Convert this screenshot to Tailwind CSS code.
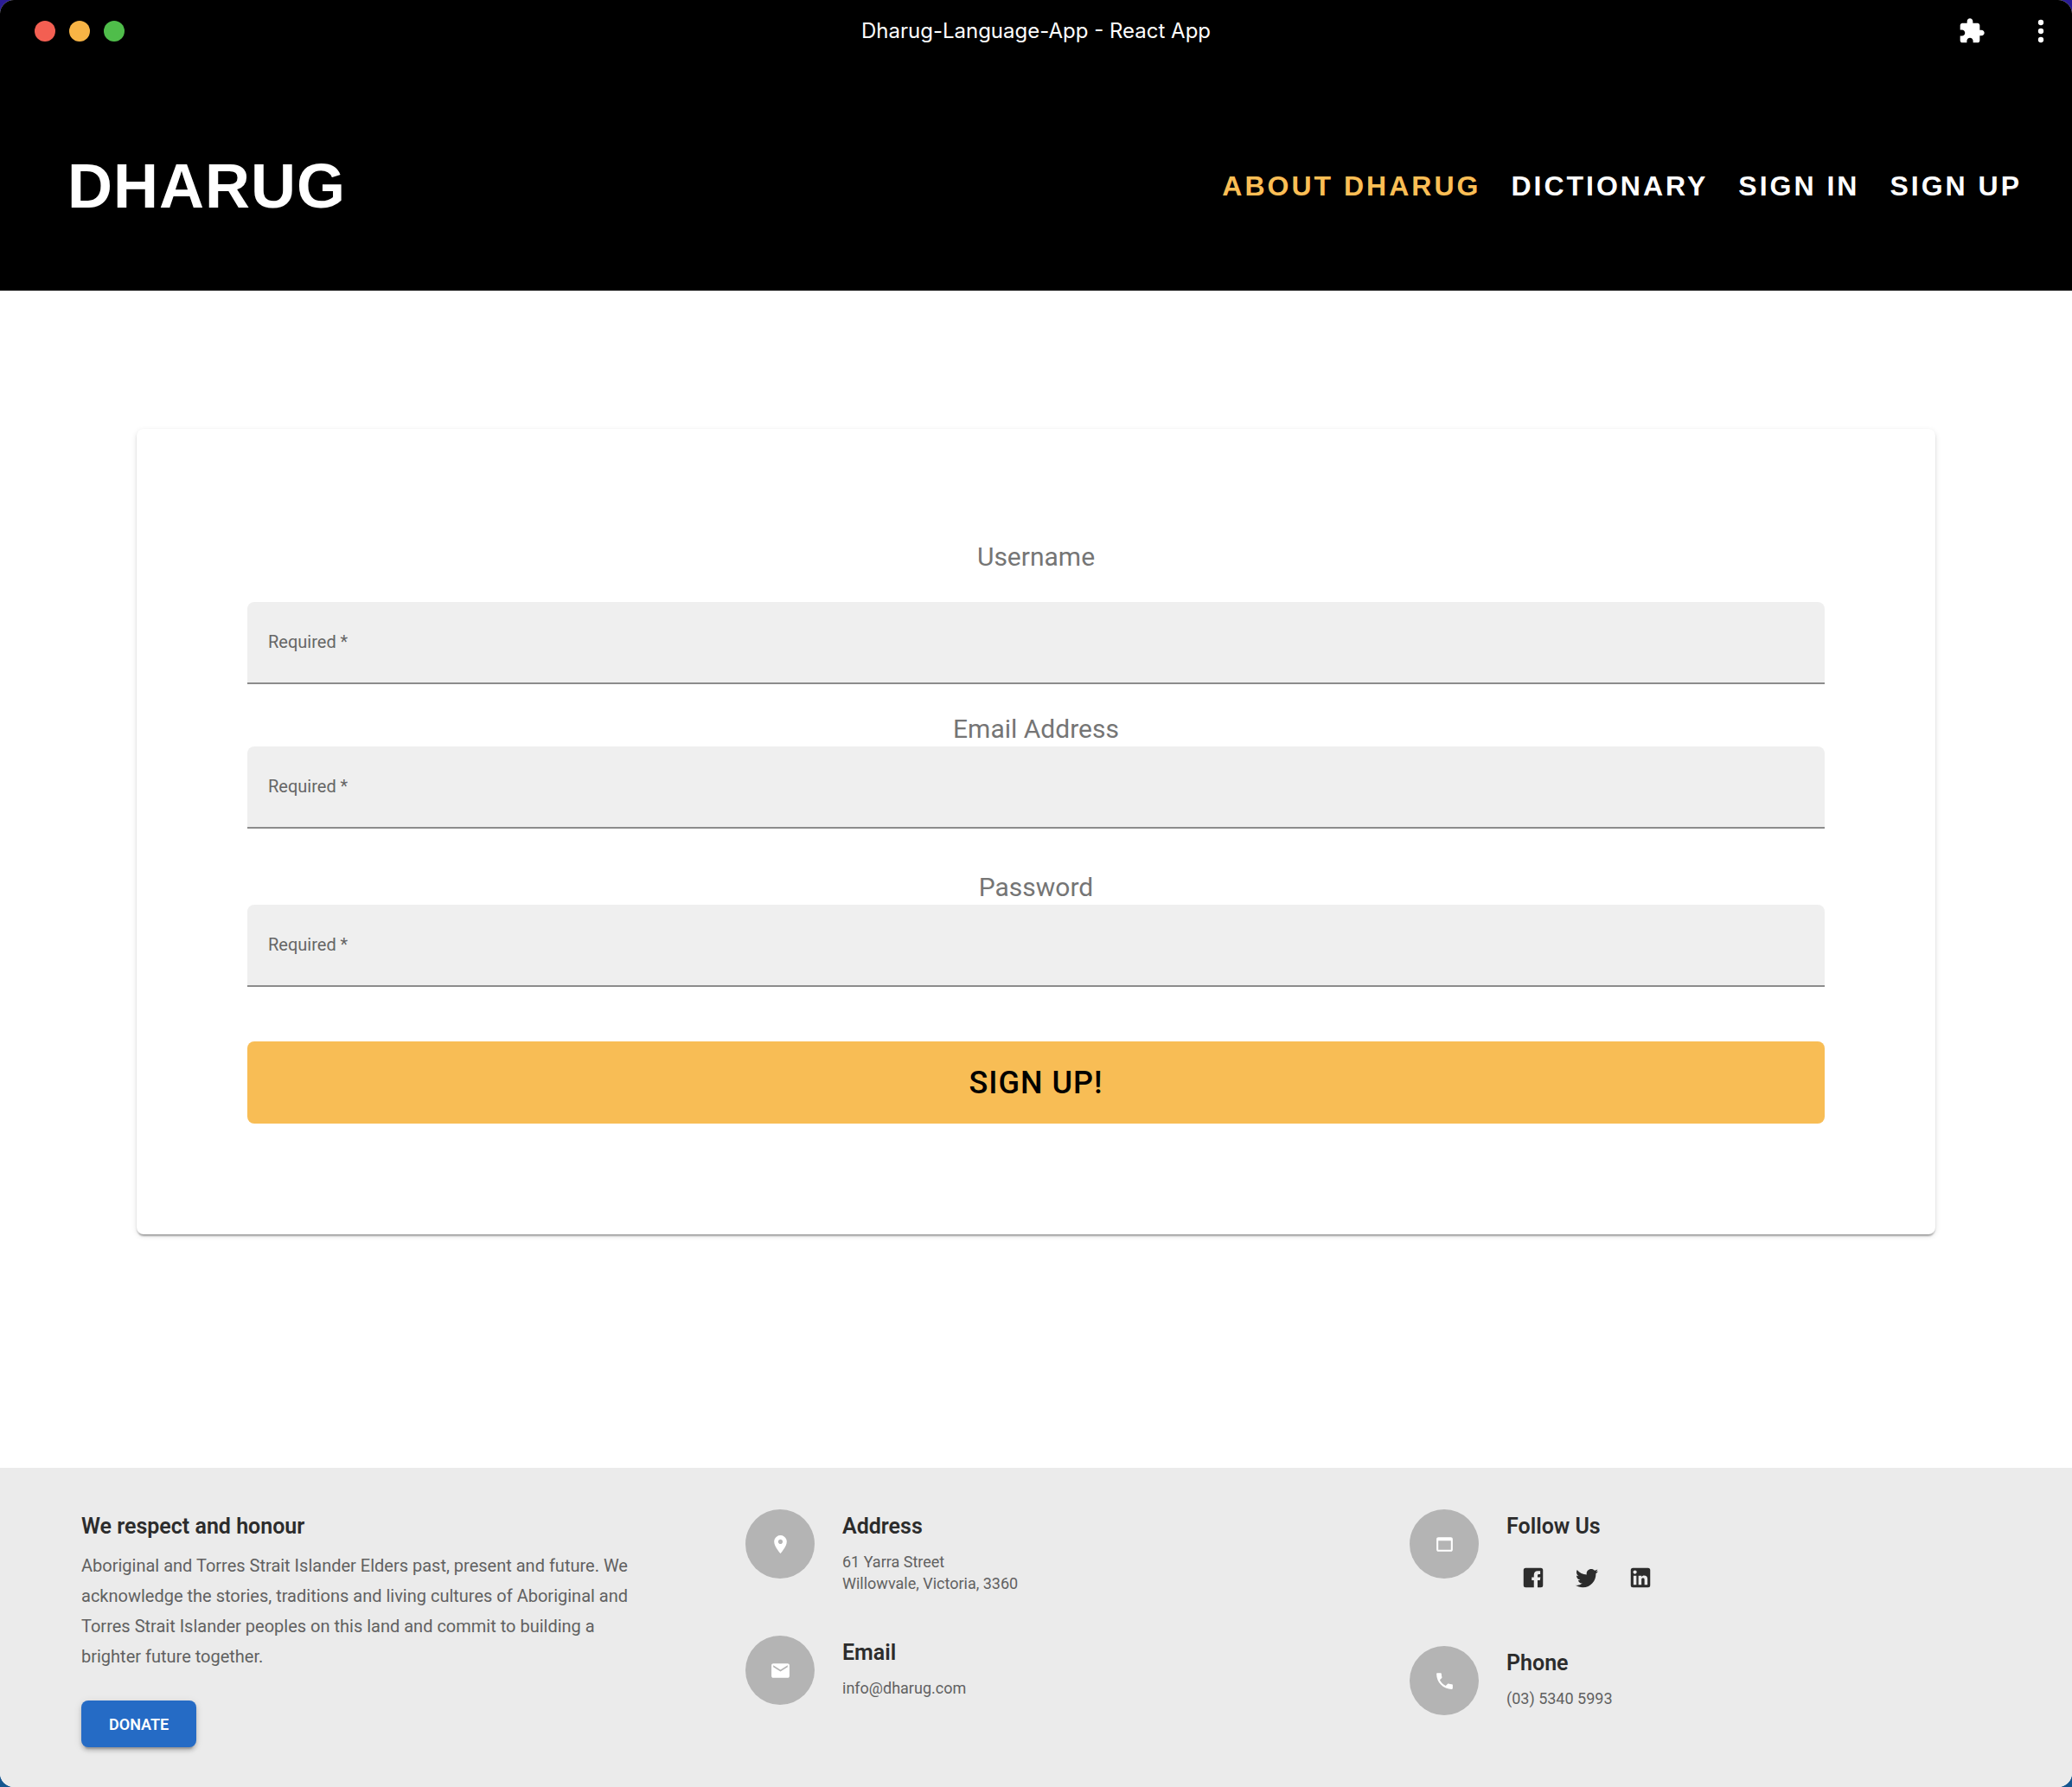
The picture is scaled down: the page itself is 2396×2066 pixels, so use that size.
<!DOCTYPE html>
<html lang="en">
<head>
<meta charset="utf-8">
<meta name="viewport" content="width=device-width, initial-scale=1">
<title>Dharug-Language-App - React App</title>
<script src="https://cdn.jsdelivr.net/npm/@tailwindcss/browser@4"></script>
</head>
<body class="bg-linear-to-b from-[#2b1c96] to-[#15568f] font-[Roboto,sans-serif]">
<div class="flex min-h-screen flex-col overflow-hidden rounded-[16px] bg-white">

  <!-- Window title bar -->
  <div class="grid h-[72px] grid-cols-[1fr_auto_1fr] items-center bg-black px-4 text-white">
    <div class="flex gap-4 pl-6">
      <span class="size-6 rounded-full bg-[#f35f52]"></span>
      <span class="size-6 rounded-full bg-[#f8b445]"></span>
      <span class="size-6 rounded-full bg-[#4fbd4a]"></span>
    </div>
    <div class="font-[Inter,sans-serif] text-[24px] leading-8">Dharug-Language-App - React App</div>
    <div class="flex items-center justify-end gap-11">
      <button type="button" aria-label="Extensions">
        <svg class="size-8" viewBox="0 0 24 24" fill="currentColor"><path d="M20.5 11H19V7c0-1.1-.9-2-2-2h-4V3.5C13 2.12 11.88 1 10.5 1S8 2.12 8 3.5V5H4c-1.1 0-1.99.9-1.99 2v3.8H3.5c1.49 0 2.7 1.21 2.7 2.7s-1.21 2.7-2.7 2.7H2V20c0 1.1.9 2 2 2h3.8v-1.5c0-1.49 1.21-2.7 2.7-2.7 1.49 0 2.7 1.21 2.7 2.7V22H17c1.1 0 2-.9 2-2v-4h1.5c1.38 0 2.5-1.12 2.5-2.5S21.88 11 20.5 11z"/></svg>
      </button>
      <button type="button" aria-label="More options">
        <svg class="size-10" viewBox="0 0 24 24" fill="currentColor"><circle cx="12" cy="6" r="1.9"/><circle cx="12" cy="12" r="1.9"/><circle cx="12" cy="18" r="1.9"/></svg>
      </button>
    </div>
  </div>

  <!-- Site header -->
  <header class="flex h-[264px] items-center justify-between bg-black pt-[22px] pr-[58px] pl-[78px] font-['Liberation_Sans',sans-serif] font-bold text-white">
    <a href="#" class="text-[72px] leading-[84px] tracking-[1px]">DHARUG</a>
    <nav class="flex gap-[35px] text-[32px] leading-10 tracking-[3px]">
      <a href="#" class="text-[#fbbe55]">ABOUT DHARUG</a>
      <a href="#">DICTIONARY</a>
      <a href="#">SIGN IN</a>
      <a href="#">SIGN UP</a>
    </nav>
  </header>

  <!-- Sign-up form -->
  <main class="flex-1 px-[158px] pt-40 pb-[270px]">
    <form class="rounded-[8px] bg-white p-32 shadow-[0_4px_2px_-2px_rgba(0,0,0,0.2),0_2px_2px_0_rgba(0,0,0,0.14),0_2px_6px_0_rgba(0,0,0,0.12)]">
      <label for="username" class="mb-8 block text-center text-[30px] leading-10 text-[#757575]">Username</label>
      <input id="username" type="text" required placeholder="Required *" class="block h-[95px] w-full rounded-t-[8px] border-b-2 border-[#8c8c8c] bg-[#efefef] px-6 pb-0.5 text-[20px] placeholder:text-[#666666]">
      <label for="email" class="mt-8 block text-center text-[30px] leading-10 text-[#757575]">Email Address</label>
      <input id="email" type="email" required placeholder="Required *" class="block h-[95px] w-full rounded-t-[8px] border-b-2 border-[#8c8c8c] bg-[#efefef] px-6 pb-0.5 text-[20px] placeholder:text-[#666666]">
      <label for="password" class="mt-12 block text-center text-[30px] leading-10 text-[#757575]">Password</label>
      <input id="password" type="password" required placeholder="Required *" class="block h-[95px] w-full rounded-t-[8px] border-b-2 border-[#8c8c8c] bg-[#efefef] px-6 pb-0.5 text-[20px] placeholder:text-[#666666]">
      <button type="submit" class="mt-[63px] block h-[95px] w-full rounded-[8px] bg-[#f8bd55] text-[36px] font-medium tracking-[1px] text-black">SIGN UP!</button>
    </form>
  </main>

  <footer class="bg-[#ebebeb] px-[46px] pt-12 pb-[46px] text-[#616161]">
    <div class="grid grid-cols-3">
      <section class="px-12 pt-1">
        <h2 class="text-[25px] leading-8 font-semibold text-[#2c2c2c]">We respect and honour</h2>
        <p class="mt-3 max-w-[650px] text-[20px] leading-[35px]">Aboriginal and Torres Strait Islander Elders past, present and future. We acknowledge the stories, traditions and living cultures of Aboriginal and Torres Strait Islander peoples on this land and commit to building a brighter future together.</p>
        <button type="button" class="mt-[33px] h-[54px] rounded-[8px] bg-[#256bc5] px-8 text-[18px] font-semibold text-white shadow-[0_6px_2px_-4px_rgba(0,0,0,0.2),0_4px_4px_0_rgba(0,0,0,0.14),0_2px_10px_0_rgba(0,0,0,0.12)]">DONATE</button>
      </section>

      <section class="flex flex-col gap-12 px-12">
        <div class="flex items-start gap-8">
          <span class="flex size-20 shrink-0 items-center justify-center rounded-full bg-[#b4b4b4] text-white">
            <svg class="size-[25px]" viewBox="0 0 24 24" fill="currentColor"><path d="M12 2C8.13 2 5 5.13 5 9c0 5.25 7 13 7 13s7-7.75 7-13c0-3.87-3.13-7-7-7zm0 9.5c-1.38 0-2.5-1.12-2.5-2.5s1.12-2.5 2.5-2.5 2.5 1.12 2.5 2.5-1.12 2.5-2.5 2.5z"/></svg>
          </span>
          <div class="pt-1">
            <h2 class="text-[25px] leading-8 font-semibold text-[#2c2c2c]">Address</h2>
            <p class="mt-3 text-[18px] leading-[25px]">61 Yarra Street<br>Willowvale, Victoria, 3360</p>
          </div>
        </div>
        <div class="flex items-start gap-8">
          <span class="flex size-20 shrink-0 items-center justify-center rounded-full bg-[#b4b4b4] text-white">
            <svg class="size-[25px]" viewBox="0 0 24 24" fill="currentColor"><path d="M20 4H4c-1.1 0-1.99.9-1.99 2L2 18c0 1.1.9 2 2 2h16c1.1 0 2-.9 2-2V6c0-1.1-.9-2-2-2zm0 4l-8 5-8-5V6l8 5 8-5v2z"/></svg>
          </span>
          <div class="pt-1">
            <h2 class="text-[25px] leading-8 font-semibold text-[#2c2c2c]">Email</h2>
            <p class="mt-3 text-[18px] leading-[25px]">info@dharug.com</p>
          </div>
        </div>
      </section>

      <section class="flex flex-col gap-12 px-12">
        <div class="flex items-start gap-8">
          <span class="flex size-20 shrink-0 items-center justify-center rounded-full bg-[#b4b4b4] text-white">
            <svg class="size-[25px]" viewBox="0 0 24 24" fill="currentColor"><path d="M19 4H5c-1.11 0-2 .9-2 2v12c0 1.1.89 2 2 2h14c1.1 0 2-.9 2-2V6c0-1.1-.9-2-2-2zm0 14H5V8h14v10z"/></svg>
          </span>
          <div class="pt-1">
            <h2 class="text-[25px] leading-8 font-semibold text-[#2c2c2c]">Follow Us</h2>
            <div class="mt-3 flex text-[#2c2c2c]">
              <a href="#" aria-label="Facebook" class="p-4"><svg class="size-[30px]" viewBox="0 0 24 24" fill="currentColor"><path d="M5 3h14a2 2 0 0 1 2 2v14a2 2 0 0 1-2 2h-3v-6.700h2.200l.5-2.700H16V10c0-.8.3-1.300 1.300-1.300H18.500V5.800h-2.400c-2.300 0-3.500 1.500-3.500 3.700v2.100h-2v2.700h2V21H5a2 2 0 0 1-2-2V5a2 2 0 0 1 2-2z"/></svg></a>
              <a href="#" aria-label="Twitter" class="p-4"><svg class="size-[30px]" viewBox="0 0 24 24" fill="currentColor"><path d="M22.46 6c-.77.35-1.600.58-2.460.69.88-.53 1.560-1.370 1.880-2.380-.83.5-1.750.85-2.720 1.050C18.370 4.500 17.260 4 16 4c-2.350 0-4.270 1.920-4.270 4.290 0 .34.04.67.11.98C8.280 9.090 5.110 7.380 3 4.790c-.37.63-.58 1.370-.58 2.150 0 1.490.75 2.810 1.910 3.560-.71 0-1.370-.2-1.950-.5v.03c0 2.080 1.480 3.820 3.440 4.210a4.220 4.220 0 0 1-1.930.07 4.280 4.280 0 0 0 4 2.980 8.521 8.521 0 0 1-5.330 1.840c-.34 0-.68-.02-1.020-.06C3.440 20.290 5.700 21 8.120 21 16 21 20.330 14.460 20.330 8.790c0-.19 0-.37-.01-.56.84-.6 1.560-1.360 2.140-2.230z"/></svg></a>
              <a href="#" aria-label="LinkedIn" class="p-4"><svg class="size-[30px]" viewBox="0 0 24 24" fill="currentColor"><path d="M19 3a2 2 0 0 1 2 2v14a2 2 0 0 1-2 2H5a2 2 0 0 1-2-2V5a2 2 0 0 1 2-2h14m-.5 15.500v-5.300a3.260 3.260 0 0 0-3.260-3.260c-.85 0-1.840.52-2.320 1.300v-1.110h-2.790v8.370h2.790v-4.930c0-.77.62-1.400 1.390-1.400a1.400 1.400 0 0 1 1.400 1.400v4.930h2.790M6.880 8.560a1.680 1.680 0 0 0 1.680-1.680c0-.93-.75-1.690-1.680-1.690a1.690 1.690 0 0 0-1.690 1.690c0 .93.76 1.680 1.690 1.680m1.390 9.940v-8.370H5.500v8.370h2.770z"/></svg></a>
            </div>
          </div>
        </div>
        <div class="flex items-start gap-8">
          <span class="flex size-20 shrink-0 items-center justify-center rounded-full bg-[#b4b4b4] text-white">
            <svg class="size-[25px]" viewBox="0 0 24 24" fill="currentColor"><path d="M6.620 10.790c1.440 2.830 3.760 5.140 6.590 6.590l2.200-2.200c.27-.27.67-.36 1.020-.24 1.120.37 2.330.57 3.570.57.55 0 1 .45 1 1V20c0 .55-.45 1-1 1-9.390 0-17-7.610-17-17 0-.55.45-1 1-1h3.500c.55 0 1 .45 1 1 0 1.250.2 2.450.57 3.570.11.35.03.74-.25 1.020l-2.200 2.200z"/></svg>
          </span>
          <div class="pt-1">
            <h2 class="text-[25px] leading-8 font-semibold text-[#2c2c2c]">Phone</h2>
            <p class="mt-3 text-[18px] leading-[25px]">(03) 5340 5993</p>
          </div>
        </div>
      </section>
    </div>
  </footer>
</div>
</body>
</html>
